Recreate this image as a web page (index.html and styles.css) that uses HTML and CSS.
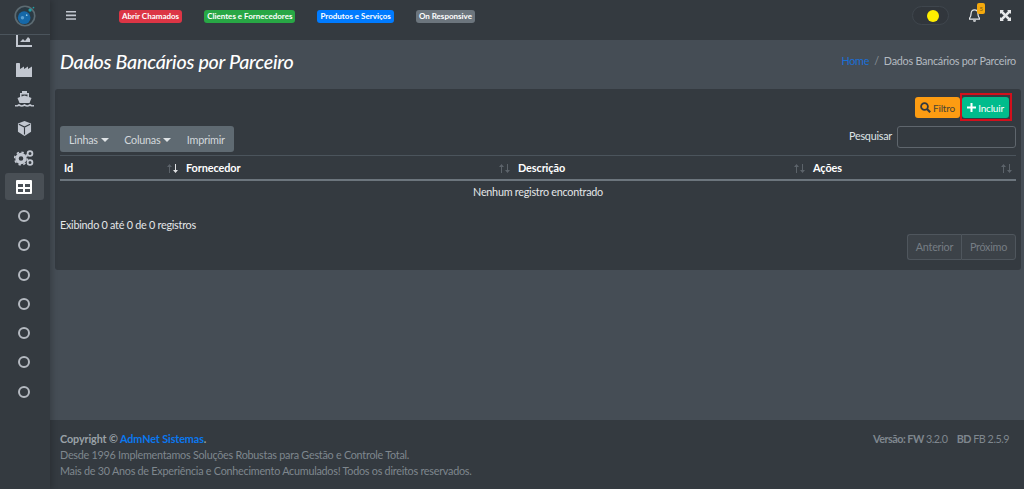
FILE: index.html
```html
<!DOCTYPE html>
<html lang="pt-BR">
<head>
    <meta charset="UTF-8">
    <meta name="viewport" content="width=device-width, initial-scale=1.0">
    <title>Dados Bancários por Parceiro</title>
    <link rel="stylesheet" href="styles.css">
</head>
<body>
    <aside class="sidebar">
        <div class="brand">
            <svg width="22" height="22" viewBox="0 0 26 26">
                <circle cx="13" cy="13" r="11.500" fill="#2b3a44" stroke="#5d6b72" stroke-width="2"/>
                <circle cx="12" cy="15" r="7.5" fill="#1668a8"/>
                <circle cx="10" cy="15" r="2" fill="#5a9fd0"/>
                <circle cx="15" cy="12" r="1" fill="#8cc4e6"/>
                <circle cx="19" cy="6" r="2" fill="#1ea0a8"/>
                <circle cx="23" cy="3" r="1" fill="#1ea0a8"/>
            </svg>
        </div>
        <nav class="side-nav">
            <a class="side-link side-first"><svg width="16" height="12" viewBox="0 0 16 12"><path d="M0 0h2v10h14v2H0z M4 7l3-3 2 2 3-4 2 2v3H4z" fill="#c2c7d0"/></svg></a>
            <a class="side-link"><svg width="16" height="14" viewBox="0 0 16 14"><path d="M0 1C0 .4.4 0 1 0h2c.6 0 1 .4 1 1v5l4-2.500V6l4-2.500V6l4-2.500V14H0z" fill="#c2c7d0"/></svg></a>
            <a class="side-link"><svg width="19" height="16" viewBox="0 0 19 16"><path d="M7 0h5v2h2v4l2.500 1-2 5H4.500l-2-5L5 6V2h2z" fill="#c2c7d0"/><path d="M6.500 3.500h6v2l-3-1-3 1z" fill="#343a40"/><path d="M0 14c2 .5 3-.5 4-1 2 1.500 3.500 1.500 5.500 0 2 1.500 3.500 1.500 5.500 0 1 .5 2 1.500 4 1v1.500c-1.500.3-3 0-4-.5-2 1-3.500 1-5.500 0-2 1-3.500 1-5.500 0-1 .5-2.500.8-4 .5z" fill="#c2c7d0"/></svg></a>
            <a class="side-link"><svg width="15" height="15" viewBox="0 0 16 16"><path d="M8 0l7 2.700v8.800L8 16 1 11.500V2.700z" fill="#c2c7d0"/><path d="M8 7.300V14.500M2 3.400l6 3 6-3" fill="none" stroke="#343a40" stroke-width="1.200"/></svg></a>
            <a class="side-link"><svg width="20" height="16" viewBox="0 0 20 16"><circle cx="7" cy="8.500" r="4" fill="none" stroke="#c2c7d0" stroke-width="3.400"/><circle cx="7" cy="8.500" r="6.300" fill="none" stroke="#c2c7d0" stroke-width="1.600" stroke-dasharray="2.400 2.500"/><circle cx="16" cy="3.500" r="2.400" fill="none" stroke="#c2c7d0" stroke-width="1.800"/><circle cx="16" cy="12.500" r="2.400" fill="none" stroke="#c2c7d0" stroke-width="1.800"/></svg></a>
            <a class="side-link side-active"><svg width="16" height="14" viewBox="0 0 16 14"><path d="M1 0h14a1 1 0 0 1 1 1v12a1 1 0 0 1-1 1H1a1 1 0 0 1-1-1V1a1 1 0 0 1 1-1zM2 4v3h5V4zm7 0v3h5V4zM2 9v3h5V9zm7 0v3h5V9z" fill="#fff" fill-rule="evenodd"/></svg></a>
            <a class="side-link"><span class="circle"></span></a>
            <a class="side-link"><span class="circle"></span></a>
            <a class="side-link"><span class="circle"></span></a>
            <a class="side-link"><span class="circle"></span></a>
            <a class="side-link"><span class="circle"></span></a>
            <a class="side-link"><span class="circle"></span></a>
            <a class="side-link"><span class="circle"></span></a>
        </nav>
    </aside>

    <div class="wrapper">
        <header class="topbar">
            <svg class="burger" width="10" height="9" viewBox="0 0 10 9"><path d="M0 0h10v1.600H0zM0 3.600h10v1.600H0zM0 7.200h10v1.600H0z" fill="#c2c7d0"/></svg>
            <div class="shortcuts">
                <a class="tag tag-red">Abrir Chamados</a>
                <a class="tag tag-green">Clientes e Fornecedores</a>
                <a class="tag tag-blue">Produtos e Serviços</a>
                <a class="tag tag-gray">On Responsive</a>
            </div>
            <div class="top-right">
                <div class="toggle"><span class="toggle-dot"></span></div>
                <div class="bell">
                    <svg width="11" height="13" viewBox="0 0 11 13"><path d="M5.500 0.800c2.200 0 3.400 1.600 3.400 3.800 0 2.300.6 3.500 1.500 4.500v1H.6v-1c.9-1 1.500-2.200 1.500-4.500 0-2.200 1.200-3.800 3.400-3.800z" fill="none" stroke="#e6e8ea" stroke-width="1.200"/><path d="M4 11.200h3c0 1-.6 1.500-1.500 1.500S4 12.200 4 11.200z" fill="#e6e8ea"/></svg>
                    <span class="bell-count">5</span>
                </div>
                <svg class="expand" width="11" height="11" viewBox="0 0 11 11"><path d="M0 0h4L2.900 1.100 5.500 3.700 8.100 1.100 7 0h4v4L9.900 2.900 7.300 5.500l2.600 2.600L11 7v4H7l1.100-1.100L5.500 7.300 2.900 9.900 4 11H0V7l1.100 1.100 2.600-2.600L1.100 2.900 0 4z" fill="#e6e8ea"/></svg>
            </div>
        </header>

        <main class="content">
            <div class="page-head">
                <h1 class="page-title">Dados Bancários por Parceiro</h1>
                <div class="breadcrumb"><a class="link-blue">Home</a><span class="crumb-sep">/</span><span>Dados Bancários por Parceiro</span></div>
            </div>

            <section class="card">
                <div class="card-actions">
                    <button class="btn btn-filter">
                        <svg width="11" height="11" viewBox="0 0 11 11"><circle cx="4.500" cy="4.500" r="3.400" fill="none" stroke="#343a40" stroke-width="1.800"/><path d="M7 7l3.200 3.200" stroke="#343a40" stroke-width="2.200"/></svg>
                        Filtro
                    </button>
                    <div class="highlight">
                        <button class="btn btn-add">
                            <svg width="9" height="9" viewBox="0 0 9 9"><path d="M3.500 0h2v3.500H9v2H5.500V9h-2V5.500H0v-2h3.500z" fill="#fff"/></svg>
                            Incluir
                        </button>
                    </div>
                </div>

                <div class="table-tools">
                    <div class="btn-group">
                        <span class="tool">Linhas<i class="caret"></i></span>
                        <span class="tool">Colunas<i class="caret"></i></span>
                        <span class="tool">Imprimir</span>
                    </div>
                    <label class="search"><span class="search-label">Pesquisar</span><input class="search-input" type="text"></label>
                </div>

                <table class="grid">
                    <thead>
                        <tr>
                            <th class="col-id">Id<svg class="sort" width="11" height="9" viewBox="0 0 11 9"><path class="sort-dim" d="M2 9V3H0l2.500-3L5 3H3v6z"/><path class="sort-lit" d="M8 0v6H6l2.500 3L11 6H9V0z"/></svg></th>
                            <th class="col-forn">Fornecedor<svg class="sort" width="11" height="9" viewBox="0 0 11 9"><path class="sort-dim" d="M2 9V3H0l2.500-3L5 3H3v6zM8 0v6H6l2.500 3L11 6H9V0z"/></svg></th>
                            <th class="col-desc">Descrição<svg class="sort" width="11" height="9" viewBox="0 0 11 9"><path class="sort-dim" d="M2 9V3H0l2.500-3L5 3H3v6zM8 0v6H6l2.500 3L11 6H9V0z"/></svg></th>
                            <th>Ações<svg class="sort" width="11" height="9" viewBox="0 0 11 9"><path class="sort-dim" d="M2 9V3H0l2.500-3L5 3H3v6zM8 0v6H6l2.500 3L11 6H9V0z"/></svg></th>
                        </tr>
                    </thead>
                    <tbody>
                        <tr><td colspan="4">Nenhum registro encontrado</td></tr>
                    </tbody>
                </table>

                <p class="info">Exibindo 0 até 0 de 0 registros</p>

                <div class="pager">
                    <span class="page-btn">Anterior</span>
                    <span class="page-btn">Próximo</span>
                </div>
            </section>
        </main>

        <footer class="footer">
            <div class="foot-left">
                <div><b>Copyright © <a class="foot-link">AdmNet Sistemas</a>.</b></div>
                <div>Desde 1996 Implementamos Soluções Robustas para Gestão e Controle Total.</div>
                <div>Mais de 30 Anos de Experiência e Conhecimento Acumulados! Todos os direitos reservados.</div>
            </div>
            <div class="foot-right"><b>Versão: FW</b> 3.2.0 <b class="foot-bd">BD</b> FB 2.5.9</div>
        </footer>
    </div>
</body>
</html>
```

FILE: styles.css
```css
* {
    box-sizing: border-box;
}

body {
    display: flex;
    height: 100vh;
    margin: 0;
    overflow: hidden;
    background-color: #454d55;
    color: #fff;
    font-family: "Lato", "Open Sans", sans-serif;
    font-size: 10.8px;
    letter-spacing: -0.25px;
}

/* sidebar */
.sidebar {
    width: 50px;
    flex-shrink: 0;
    display: flex;
    flex-direction: column;
    background-color: #343a40;
    box-shadow: 2px 0 6px rgba(0, 0, 0, 0.2);
    z-index: 2;
}

.brand {
    height: 35px;
    flex-shrink: 0;
    display: flex;
    justify-content: center;
    padding: 5px 1px 0 0;
    border-bottom: 1px solid #4b545c;
}

.side-nav {
    flex: 1;
    overflow: hidden;
    padding: 0 6px 0 5px;
}

.side-link {
    display: flex;
    justify-content: center;
    align-items: center;
    height: 27px;
    margin-bottom: 2.25px;
    border-radius: 3px;
}

.side-link > svg,
.side-link > .circle {
    margin-right: 1px;
}

.side-first {
    margin-top: -8px;
}

.side-active {
    background-color: #494f55;
}

.circle {
    width: 12px;
    height: 12px;
    border: 2px solid #b4b9c0;
    border-radius: 50%;
}

/* top bar */
.wrapper {
    flex: 1;
    min-width: 0;
    display: flex;
    flex-direction: column;
}

.topbar {
    height: 40px;
    flex-shrink: 0;
    display: flex;
    align-items: center;
    padding-left: 16px;
    padding-right: 13px;
    background-color: #343a40;
}

.burger {
    margin-top: -10px;
}

.shortcuts {
    display: flex;
    gap: 22px;
    margin-left: 43px;
    margin-top: -7px;
}

.tag {
    display: block;
    height: 13px;
    padding: 0 3px;
    border-radius: 3px;
    color: #fff;
    font-size: 8px;
    font-weight: 700;
    letter-spacing: 0;
    line-height: 13px;
    white-space: nowrap;
}

.tag-red {
    background-color: #dc3545;
}

.tag-green {
    background-color: #28a745;
}

.tag-blue {
    background-color: #007bff;
}

.tag-gray {
    background-color: #6c757d;
}

.top-right {
    display: flex;
    align-items: center;
    margin-left: auto;
    margin-top: -9px;
}

.toggle {
    display: flex;
    align-items: center;
    justify-content: flex-end;
    width: 37px;
    height: 19px;
    padding-right: 9px;
    border: 1px solid #3f464d;
    border-radius: 10px;
    background-color: #31363c;
}

.toggle-dot {
    width: 12px;
    height: 12px;
    border-radius: 50%;
    background-color: #ffee00;
}

.bell {
    position: relative;
    display: flex;
    margin-left: 20px;
}

.bell-count {
    position: absolute;
    top: -6px;
    left: 8px;
    width: 8px;
    height: 11px;
    border-radius: 2px;
    background-color: #f5a90d;
    color: #7a5a10;
    font-size: 6px;
    line-height: 11px;
    text-align: center;
}

.expand {
    margin-left: 20px;
}

/* page */
.content {
    flex: 1;
    min-height: 0;
    padding: 0 3px 0 5px;
}

.page-head {
    height: 49px;
    display: flex;
    justify-content: space-between;
    align-items: center;
    padding: 0 5px 5px;
}

.page-title {
    margin: 0;
    font-size: 19.7px;
    font-style: italic;
    font-weight: 500;
    line-height: 1;
}

.breadcrumb {
    margin-bottom: 3px;
    color: #b4bac0;
}

.link-blue {
    color: #1a6fd8;
}

.crumb-sep {
    padding: 0 5px;
    color: #8a9299;
}

.card {
    height: 181px;
    padding: 8px 5px 0;
    background-color: #343a40;
    border-radius: 3px;
}

.card-actions {
    display: flex;
    justify-content: flex-end;
    align-items: flex-start;
    height: 21px;
    padding-right: 4px;
}

.btn {
    display: flex;
    align-items: center;
    justify-content: center;
    gap: 2px;
    height: 21px;
    padding: 0;
    border: 0;
    border-radius: 3px;
    font-family: inherit;
    font-size: 10px;
    letter-spacing: -0.2px;
}

.btn-filter {
    width: 45px;
    background-color: #fd9c12;
    color: #4a4434;
}

.highlight {
    margin-top: -4px;
    padding: 2px 1px 1px 0;
    border: 2px solid #d3101c;
}

.btn-add {
    width: 47px;
    background-color: #00bc8c;
    color: #fff;
}

.table-tools {
    display: flex;
    justify-content: space-between;
    align-items: flex-start;
    margin-top: 8px;
}

.btn-group {
    display: flex;
    align-items: center;
    gap: 15.5px;
    height: 26px;
    padding: 0 9px;
    border-radius: 3px;
    background-color: #5f6a72;
    color: #d3d8dc;
}

.caret {
    display: inline-block;
    margin-left: 3px;
    vertical-align: 2px;
    border-top: 4px solid #dfe3e6;
    border-left: 4px solid transparent;
    border-right: 4px solid transparent;
}

.search {
    display: flex;
    align-items: center;
    gap: 5px;
    color: #dfe3e6;
}

.search-label {
    margin-bottom: 3px;
}

.search-input {
    width: 119px;
    height: 22px;
    padding: 0;
    border: 1px solid #5f666d;
    border-radius: 3px;
    background-color: #343a40;
}

.grid {
    width: 100%;
    margin-top: 3px;
    border-collapse: collapse;
    table-layout: fixed;
}

.grid th {
    position: relative;
    height: 24px;
    padding: 0 4px;
    border-top: 1px solid #4b545c;
    border-bottom: 2px solid #6c757d;
    font-size: 10.9px;
    font-weight: 700;
    letter-spacing: -0.1px;
    text-align: left;
}

.grid td {
    height: 23px;
    padding: 0;
    color: #e4e6e8;
    text-align: center;
}

.col-id {
    width: 122px;
}

.col-forn {
    width: 332px;
}

.col-desc {
    width: 295px;
}

.sort {
    position: absolute;
    top: 8px;
    right: 4px;
}

.sort-dim {
    fill: #5c636a;
}

.sort-lit {
    fill: #e0e2e4;
}

.info {
    margin: 15px 0 0;
    color: #e4e6e8;
}

.pager {
    display: flex;
    justify-content: flex-end;
    margin-top: 3px;
}

.page-btn {
    display: flex;
    align-items: center;
    justify-content: center;
    width: 55px;
    height: 26px;
    border: 1px solid #4f565d;
    background-color: #3c4248;
    color: #767d84;
}

.page-btn:first-child {
    width: 54px;
    border-radius: 3px 0 0 3px;
    border-right: 0;
}

.page-btn:last-child {
    border-radius: 0 3px 3px 0;
}

/* footer */
.footer {
    height: 69px;
    flex-shrink: 0;
    display: flex;
    justify-content: space-between;
    padding: 11px 15px 0 10px;
    background-color: #343a40;
    color: #7f878e;
    line-height: 16px;
}

.foot-left b {
    color: #9aa1a7;
    letter-spacing: -0.1px;
}

.foot-right {
    letter-spacing: -0.5px;
}

.foot-link {
    color: #0a78f0;
}

.foot-bd {
    margin-left: 7px;
}
```
